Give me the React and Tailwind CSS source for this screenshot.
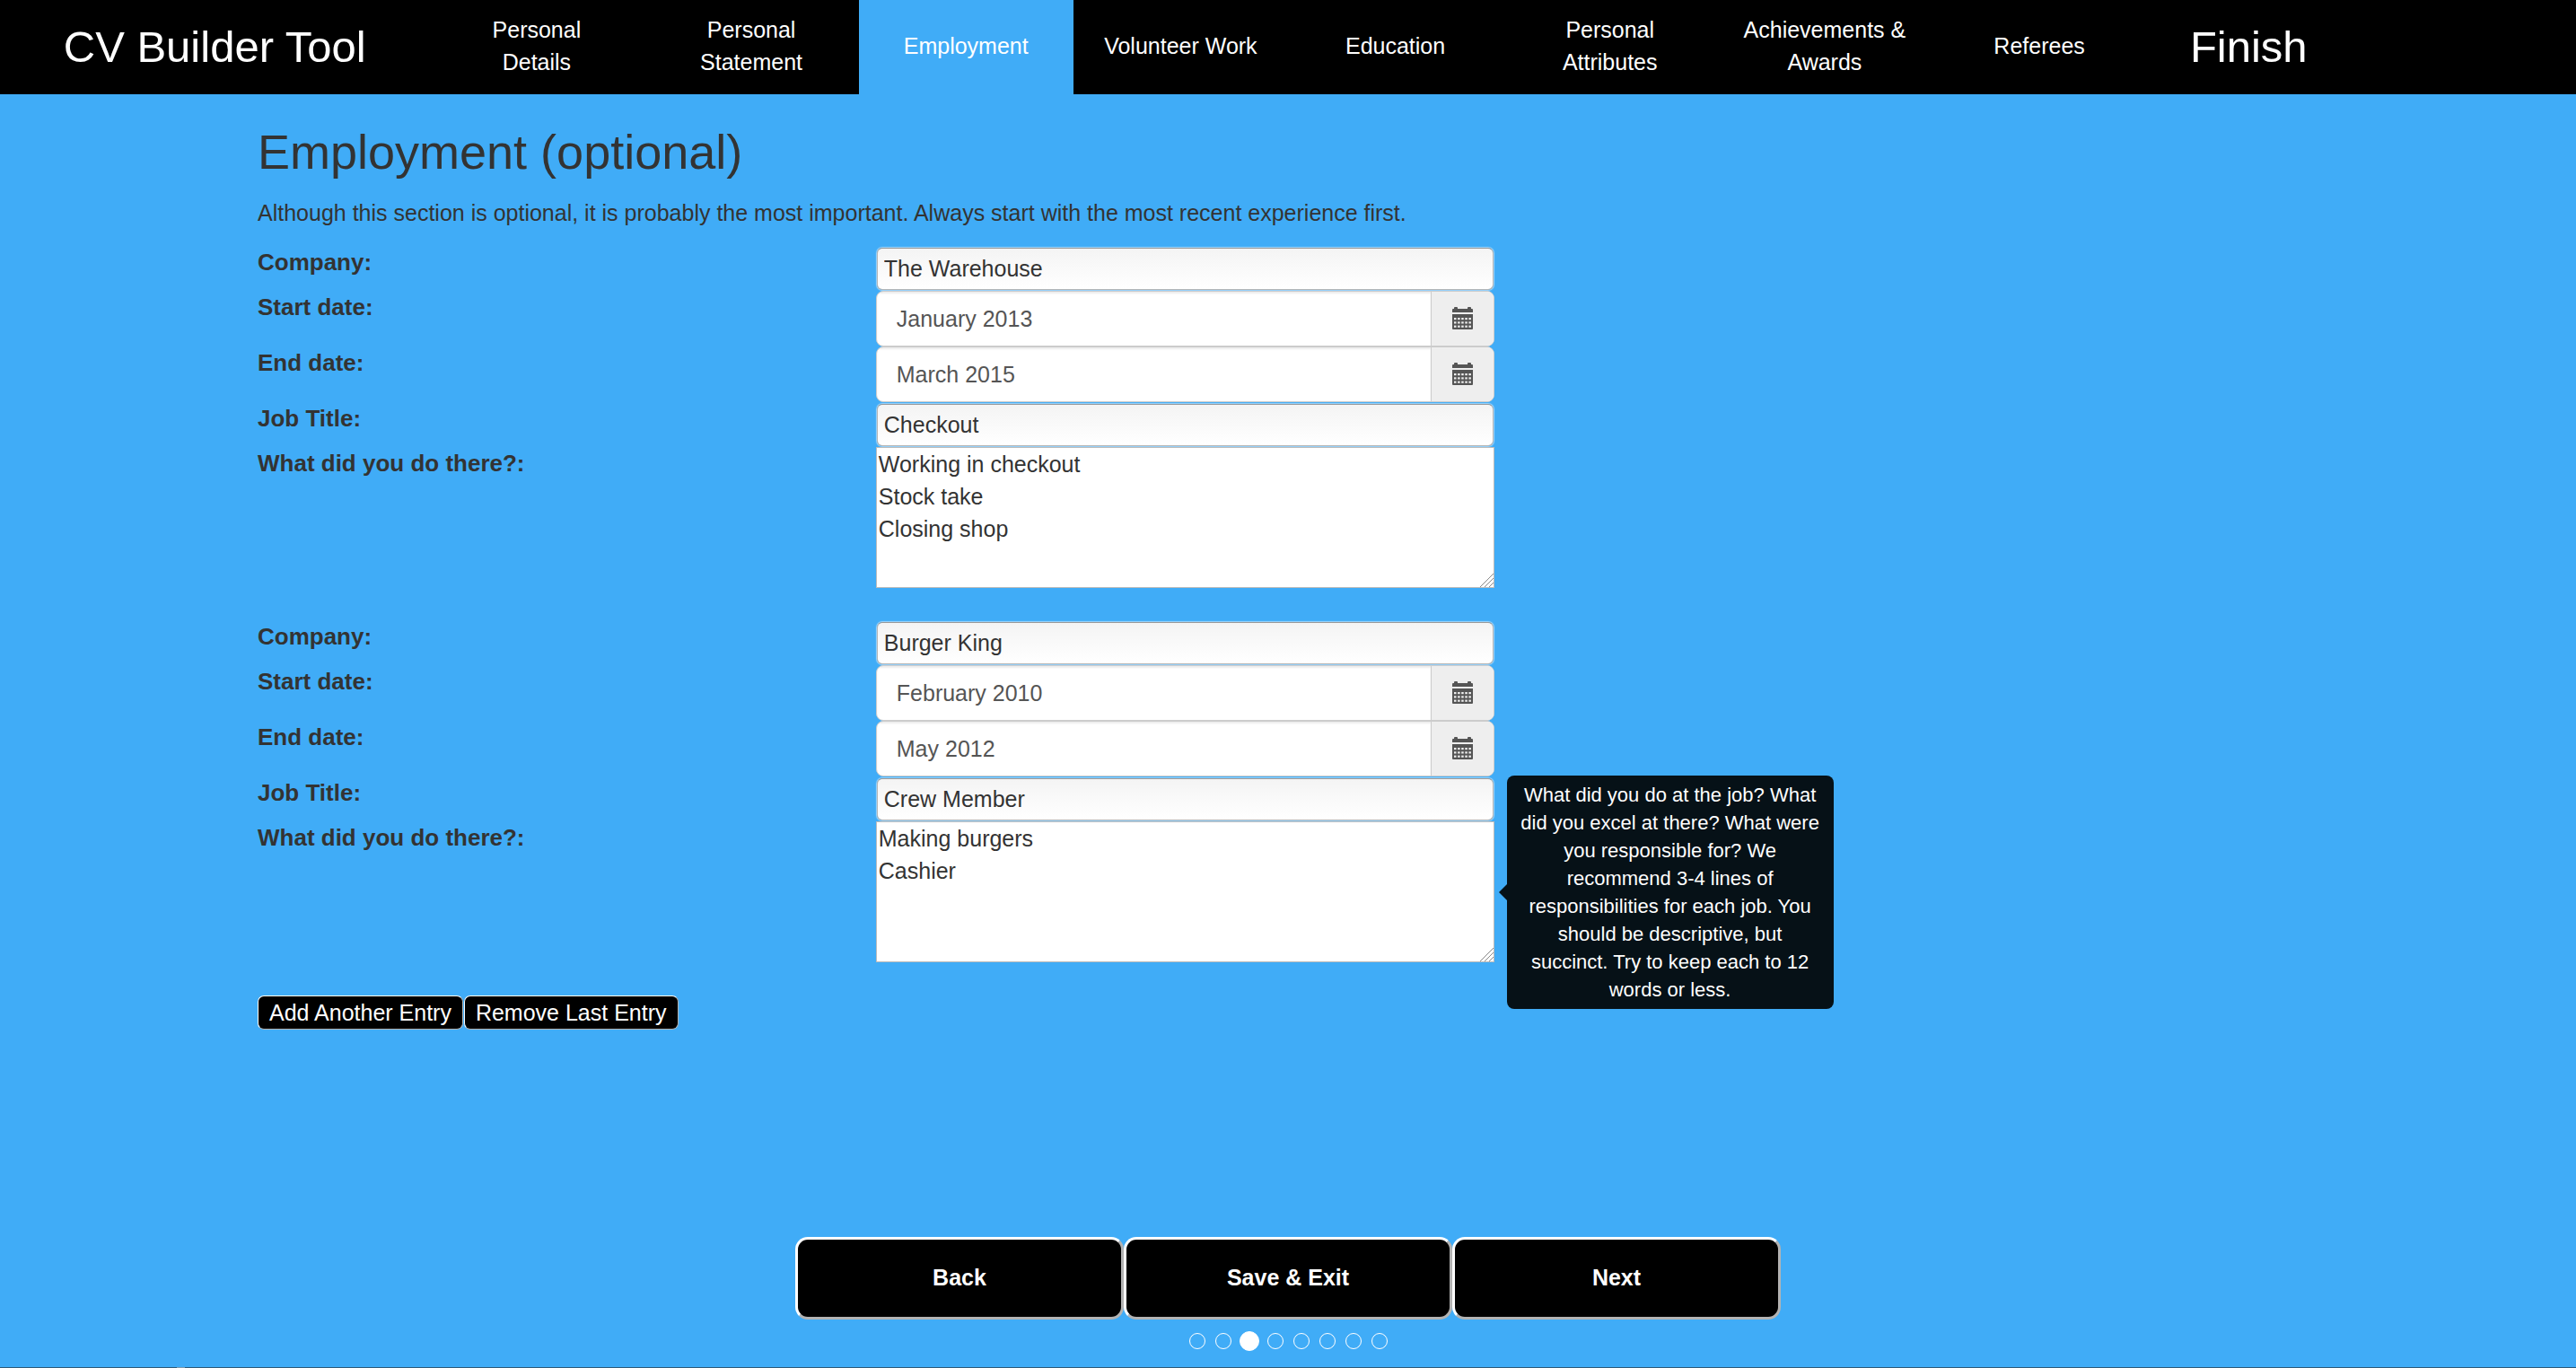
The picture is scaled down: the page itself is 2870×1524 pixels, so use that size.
const steps = [
  "Personal Details",
  "Personal Statement",
  "Employment",
  "Volunteer Work",
  "Education",
  "Personal Attributes",
  "Achievements & Awards",
  "Referees",
];

const entries = [
  {
    company: "The Warehouse",
    start: "January 2013",
    end: "March 2015",
    title: "Checkout",
    duties: "Working in checkout\nStock take\nClosing shop",
  },
  {
    company: "Burger King",
    start: "February 2010",
    end: "May 2012",
    title: "Crew Member",
    duties: "Making burgers\nCashier",
    hint: "What did you do at the job? What did you excel at there? What were you responsible for? We recommend 3-4 lines of responsibilities for each job. You should be descriptive, but succinct. Try to keep each to 12 words or less.",
  },
];

function CalendarIcon() {
  const holeColumns = [2, 6.1, 10.2, 14.3, 18.4];
  const holeRows = [12, 16.3, 20.6];
  return (
    <svg viewBox="0 0 23 25" className="h-[25px] w-[23px]" fill="#555" aria-hidden="true">
      <path d="M0 6V3q0-1 1-1h1V1q0-1 1-1h2q1 0 1 1v1h11V1q0-1 1-1h2q1 0 1 1v1h1q1 0 1 1v3z" />
      <path d="M0 8h23v16q0 1-1 1H1q-1 0-1-1z" />
      {holeRows.map((y) =>
        holeColumns.map((x) => <rect key={`${x}-${y}`} x={x} y={y} width="2.5" height="2.2" fill="#eee" />),
      )}
    </svg>
  );
}

function Row({ id, label, children }) {
  return (
    <div className="flex">
      <label htmlFor={id} className="w-[30%] shrink-0 text-[26px] font-bold">
        {label}
      </label>
      <div className="relative w-[30%]">{children}</div>
    </div>
  );
}

function TextField({ id, value }) {
  return (
    <div className="h-[50px] px-px pt-[2px]">
      <input
        id={id}
        type="text"
        defaultValue={value}
        className="block h-[47px] w-full rounded-md border border-[#b5b5b5] border-t-[#999] bg-linear-to-b from-[#f4f4f4] to-white px-[7px] shadow-[0_0_1px_1px_rgba(255,255,255,0.5)] outline-none"
      />
    </div>
  );
}

function DateField({ id, value }) {
  return (
    <div className="flex h-[62px] overflow-hidden rounded-lg border border-[#ccc] bg-white">
      <input
        id={id}
        type="text"
        defaultValue={value}
        className="min-w-0 flex-1 px-[22px] pb-px text-[#555] shadow-[inset_0_2px_2px_rgba(0,0,0,0.075)] outline-none"
      />
      <button
        type="button"
        aria-label="Choose date"
        className="flex w-[70px] items-center justify-center border-l border-[#ccc] bg-[#eee] pb-0.5"
      >
        <CalendarIcon />
      </button>
    </div>
  );
}

function Tooltip({ text }) {
  return (
    <div
      role="tooltip"
      className="absolute top-1/2 left-full ml-[5px] flex -translate-y-1/2 items-center"
    >
      <svg viewBox="0 0 9 18" className="h-[18px] w-[9px] shrink-0" fill="#061117" aria-hidden="true">
        <path d="M9 0v18L0 9z" />
      </svg>
      <div className="w-[364px] rounded-lg bg-[#061117] px-3 py-[6px] text-center text-[22px] leading-[31px] text-white">
        {text}
      </div>
    </div>
  );
}

function Entry({ entry, index }) {
  const id = (name) => `${name}-${index}`;
  return (
    <fieldset>
      <Row id={id("company")} label="Company:">
        <TextField id={id("company")} value={entry.company} />
      </Row>
      <Row id={id("start")} label="Start date:">
        <DateField id={id("start")} value={entry.start} />
      </Row>
      <Row id={id("end")} label="End date:">
        <DateField id={id("end")} value={entry.end} />
      </Row>
      <Row id={id("title")} label="Job Title:">
        <TextField id={id("title")} value={entry.title} />
      </Row>
      <Row id={id("duties")} label="What did you do there?:">
        <textarea
          id={id("duties")}
          defaultValue={entry.duties}
          className="block h-[157px] w-full resize-none border border-[#bbb] bg-white px-[2px] outline-none"
        />
        <svg
          viewBox="0 0 15 15"
          className="pointer-events-none absolute right-px bottom-px size-[15px]"
          stroke="#888"
          aria-hidden="true"
        >
          <path d="M0 15 15 0M5 15 15 5M10 15l5-5" />
        </svg>
        {entry.hint && <Tooltip text={entry.hint} />}
      </Row>
    </fieldset>
  );
}

export default function App() {
  return (
    <div className="flex min-h-screen flex-col bg-[#40acf7] font-['Liberation_Sans',Arial,sans-serif] text-[25px] leading-9 text-[#333]">
      <header className="grid h-[105px] grid-cols-12 bg-black text-center text-white">
        <a href="#home" className="col-span-2 flex items-center justify-center pb-0.5 text-[49px]">
          CV Builder Tool
        </a>
        <nav className="col-span-8 grid grid-cols-8">
          {steps.map((step) => (
            <a
              key={step}
              href={`#${step.toLowerCase().replace(/\W+/g, "-")}`}
              aria-current={step === "Employment" ? "page" : undefined}
              className="flex items-center justify-center px-[27px] pb-[3px] aria-[current=page]:bg-[#40acf7]"
            >
              {step.startsWith("Personal ") ? (
                <span>
                  Personal
                  <br />
                  {step.slice(9)}
                </span>
              ) : (
                step
              )}
            </a>
          ))}
        </nav>
        <a href="#finish" className="flex items-center justify-center pr-3 pb-0.5 text-[49px]">
          Finish
        </a>
      </header>

      <main className="mx-[10%] mt-[34px]">
        <h1 className="text-[54px] leading-[60px]">Employment (optional)</h1>
        <p className="mt-5">
          Although this section is optional, it is probably the most important. Always start with the most
          recent experience first.
        </p>
        <form className="mt-[19px]">
          <div className="flex flex-col gap-9">
            {entries.map((entry, index) => (
              <Entry key={entry.company} entry={entry} index={index} />
            ))}
          </div>
          <div className="mt-[37px] flex gap-px">
            {["Add Another Entry", "Remove Last Entry"].map((label) => (
              <button
                key={label}
                type="button"
                className="rounded-[7px] border border-t-white border-r-[#b3b3b3] border-b-[#b3b3b3] border-l-white bg-black px-3 text-white"
              >
                {label}
              </button>
            ))}
          </div>
        </form>
      </main>

      <footer className="mt-auto">
        <div className="flex justify-center">
          {["Back", "Save & Exit", "Next"].map((label) => (
            <button
              key={label}
              type="button"
              className="h-[92px] w-[366px] rounded-[14px] border-3 border-t-white border-r-[#b3b3b3] border-b-[#b3b3b3] border-l-white bg-black pb-0.5 font-bold text-white"
            >
              {label}
            </button>
          ))}
        </div>
        <div className="mt-[13px] mb-[18px] flex h-[22px] items-center justify-center gap-[11px]">
          {steps.map((step) => (
            <button
              key={step}
              type="button"
              aria-label={step}
              aria-current={step === "Employment" ? "step" : undefined}
              className="size-[18px] rounded-full border border-white aria-[current=step]:-mx-[2px] aria-[current=step]:size-[22px] aria-[current=step]:bg-white"
            />
          ))}
        </div>
        <div className="flex h-px bg-[#2f5a78]">
          <div className="ml-[197px] w-[9px] bg-[#7d9aae]" />
        </div>
      </footer>
    </div>
  );
}
